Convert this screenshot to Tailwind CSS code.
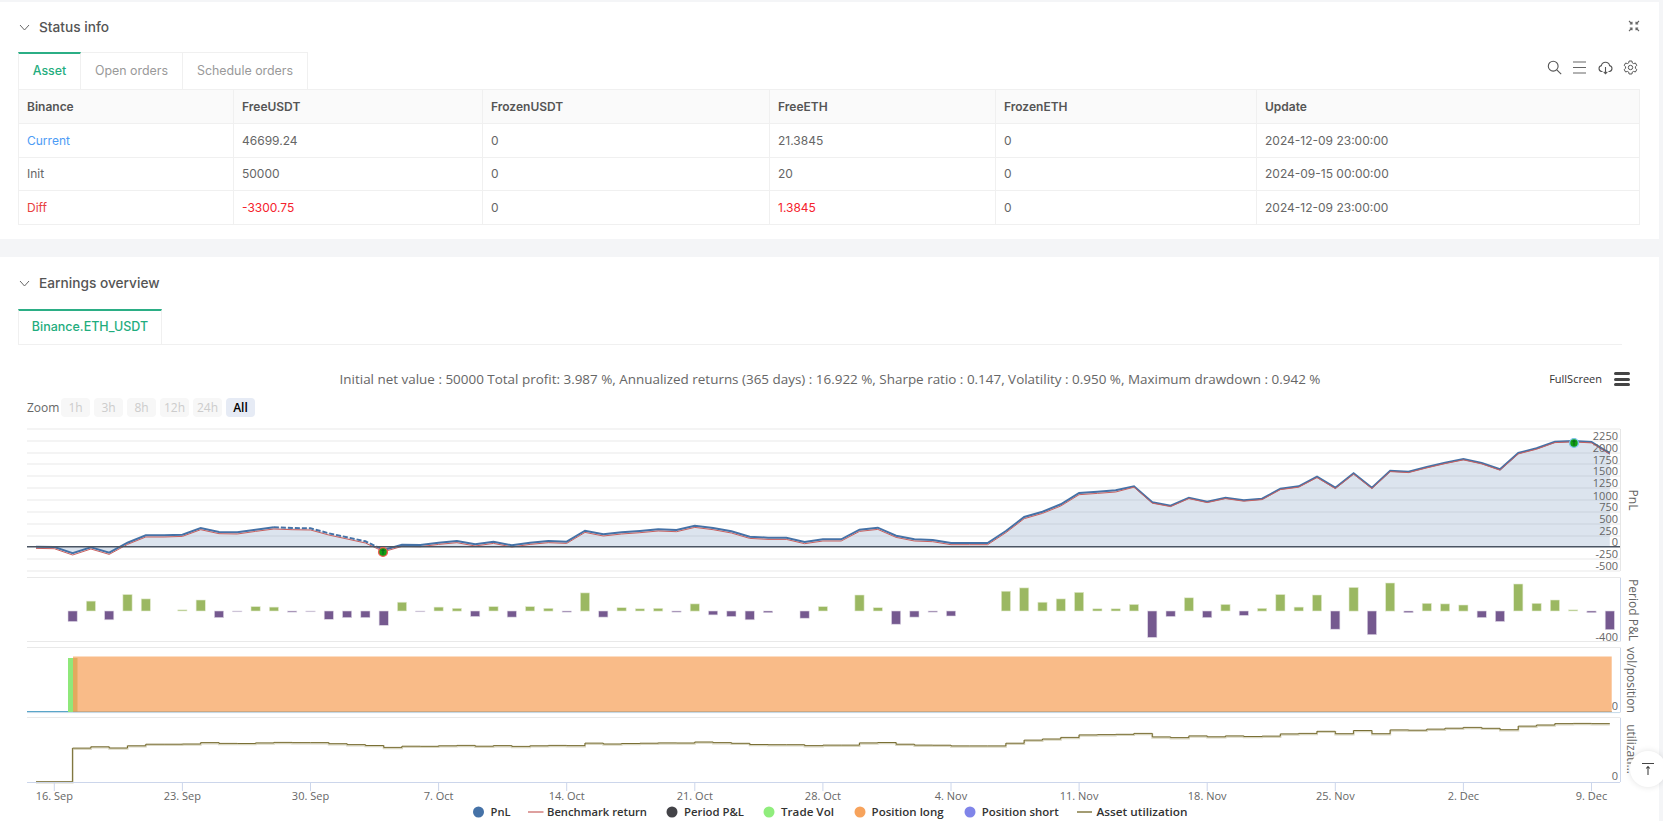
<!DOCTYPE html>
<html lang="en">
<head>
  <meta charset="UTF-8" />
  <title>Status info</title>
  <script src="https://cdn.jsdelivr.net/npm/@tailwindcss/browser@4"></script>
</head>
<body class="bg-[#f4f5f7] font-['Inter','Liberation_Sans',sans-serif] h-[821px] w-[1663px] overflow-hidden relative">

  <!-- Status info -->
  <section class="bg-white w-[1659px] mt-[2px] h-[237px] px-[18px] relative">
    <div class="flex items-center h-[50px] text-[#555]">
      <svg class="w-[11px] h-[7px] ml-[1px]" viewBox="0 0 11 7" fill="none" stroke="#666" stroke-width="1"><path d="M1 1l4.5 5L10 1" /></svg>
      <span class="ml-[9px] text-[13.7px] font-medium">Status info</span>
      <svg class="absolute right-[19px] top-[18px] w-[12px] h-[12px]" viewBox="0 0 12 12" fill="none" stroke="#666" stroke-width="1.1"><path d="M1 1l3 3M4 1.8V4H1.8M11 1L8 4M8 1.8V4h2.2M1 11l3-3M4 10.2V8H1.8M11 11L8 8M8 10.2V8h2.2" /></svg>
    </div>

    <div class="flex h-[37px] text-[12.4px] text-[#999]">
      <div class="w-[63px] border-t-2 border-t-[#2bae85] border-x border-[#f0f0f0] text-[#1fad7e] flex items-center justify-center font-medium">Asset</div>
      <div class="w-[102px] border-t border-r border-[#f0f0f0] flex items-center justify-center">Open orders</div>
      <div class="w-[125px] border-t border-r border-[#f0f0f0] flex items-center justify-center">Schedule orders</div>
      <div class="flex-1 flex items-center justify-end gap-[10.5px] pr-[3px] -mt-[6px]">
        <svg class="w-[15px] h-[15px]" viewBox="0 0 15 15" fill="none" stroke="#555" stroke-width="1.1"><circle cx="6.2" cy="6.2" r="4.9" /><path d="M9.8 9.8l4.4 4.4" /></svg>
        <svg class="w-[15px] h-[15px]" viewBox="0 0 15 15" fill="none" stroke="#666" stroke-width="1.1"><path d="M1 2h13M1 7.5h13M1 13h13" /></svg>
        <svg class="w-[15px] h-[15px]" viewBox="0 0 15 15" fill="none" stroke="#555" stroke-width="1.1"><path d="M4.5 11.5H3.6A3 3 0 0 1 3.4 5.6a4.2 4.2 0 0 1 8.2 0 3 3 0 0 1-.2 5.9h-.9M7.5 7v6.5M5.7 11.8l1.8 1.8 1.8-1.8" /></svg>
        <svg class="w-[15px] h-[15px]" viewBox="0 0 15 15" fill="none" stroke="#555" stroke-width="1"><path d="M6.1 1h2.8l.4 1.9 1.3.7 1.8-.6 1.4 2.4-1.4 1.3v1.6l1.4 1.3-1.4 2.4-1.8-.6-1.3.7-.4 1.9H6.1l-.4-1.9-1.3-.7-1.8.6-1.4-2.4 1.4-1.3V6.7L1.2 5.4 2.6 3l1.8.6 1.3-.7z" /><circle cx="7.5" cy="7.5" r="2.2" /></svg>
      </div>
    </div>

    <div class="w-[1622px] border border-[#f0f0f0] text-[12px] text-[#666]">
      <div class="grid grid-cols-[215px_249px_287px_226px_261px_1fr] h-[34px] bg-[#fafafa] font-semibold text-[#555] border-b border-[#f0f0f0]">
        <div class="px-2 flex items-center border-r border-[#f0f0f0]">Binance</div>
        <div class="px-2 flex items-center border-r border-[#f0f0f0]">FreeUSDT</div>
        <div class="px-2 flex items-center border-r border-[#f0f0f0]">FrozenUSDT</div>
        <div class="px-2 flex items-center border-r border-[#f0f0f0]">FreeETH</div>
        <div class="px-2 flex items-center border-r border-[#f0f0f0]">FrozenETH</div>
        <div class="px-2 flex items-center">Update</div>
      </div>
      <div class="grid grid-cols-[215px_249px_287px_226px_261px_1fr] h-[34px] border-b border-[#f0f0f0]">
        <div class="px-2 flex items-center border-r border-[#f0f0f0] text-[#4d9bf5]">Current</div>
        <div class="px-2 flex items-center border-r border-[#f0f0f0]">46699.24</div>
        <div class="px-2 flex items-center border-r border-[#f0f0f0]">0</div>
        <div class="px-2 flex items-center border-r border-[#f0f0f0]">21.3845</div>
        <div class="px-2 flex items-center border-r border-[#f0f0f0]">0</div>
        <div class="px-2 flex items-center">2024-12-09 23:00:00</div>
      </div>
      <div class="grid grid-cols-[215px_249px_287px_226px_261px_1fr] h-[33px] border-b border-[#f0f0f0]">
        <div class="px-2 flex items-center border-r border-[#f0f0f0]">Init</div>
        <div class="px-2 flex items-center border-r border-[#f0f0f0]">50000</div>
        <div class="px-2 flex items-center border-r border-[#f0f0f0]">0</div>
        <div class="px-2 flex items-center border-r border-[#f0f0f0]">20</div>
        <div class="px-2 flex items-center border-r border-[#f0f0f0]">0</div>
        <div class="px-2 flex items-center">2024-09-15 00:00:00</div>
      </div>
      <div class="grid grid-cols-[215px_249px_287px_226px_261px_1fr] h-[33px]">
        <div class="px-2 flex items-center border-r border-[#f0f0f0] text-[#e8403f]">Diff</div>
        <div class="px-2 flex items-center border-r border-[#f0f0f0] text-[#f5222d]">-3300.75</div>
        <div class="px-2 flex items-center border-r border-[#f0f0f0]">0</div>
        <div class="px-2 flex items-center border-r border-[#f0f0f0] text-[#f5222d]">1.3845</div>
        <div class="px-2 flex items-center border-r border-[#f0f0f0]">0</div>
        <div class="px-2 flex items-center">2024-12-09 23:00:00</div>
      </div>
    </div>
  </section>

  <!-- Earnings overview -->
  <section class="bg-white w-[1659px] mt-[18px] h-[564px] relative">
    <div class="flex items-center h-[52px] px-[18px] text-[#555]">
      <svg class="w-[11px] h-[7px] ml-[1px]" viewBox="0 0 11 7" fill="none" stroke="#666" stroke-width="1"><path d="M1 1l4.5 5L10 1" /></svg>
      <span class="ml-[9px] text-[13.7px] font-medium">Earnings overview</span>
    </div>
    <div class="mx-[18px] border-b border-[#f0f0f0] h-[36px] flex w-[1604px]">
      <div class="w-[144px] border-t-2 border-t-[#2bae85] border-x border-[#f0f0f0] text-[#1fad7e] text-[12.5px] font-medium flex items-center justify-center">Binance.ETH_USDT</div>
    </div>

    <div class="relative h-[33px] font-['Open_Sans',sans-serif] text-[#666]">
      <div class="text-center text-[13.45px] pt-[21px] leading-[26px] w-[1660px] absolute left-0 top-0">Initial net value : 50000 Total profit: 3.987 %, Annualized returns (365 days) : 16.922 %, Sharpe ratio : 0.147, Volatility : 0.950 %, Maximum drawdown : 0.942 %</div>
      <div class="absolute right-[29px] top-[26px] flex items-center gap-[12px] text-[11px] text-[#333]">
        <span>FullScreen</span>
        <div class="w-[16px] flex flex-col gap-[2.5px]">
          <div class="h-[3px] bg-[#444] rounded-sm"></div>
          <div class="h-[3px] bg-[#444] rounded-sm"></div>
          <div class="h-[3px] bg-[#444] rounded-sm"></div>
        </div>
      </div>
    </div>

    <div class="flex items-center h-[19px] mt-[20px] ml-[27px] gap-[4px] text-[12px] font-['Open_Sans',sans-serif]">
      <span class="w-[30px] text-[#666]">Zoom</span>
      <div class="w-[29px] h-[19px] bg-[#f7f7f7] text-[#ccc] rounded-sm flex items-center justify-center">1h</div>
      <div class="w-[29px] h-[19px] bg-[#f7f7f7] text-[#ccc] rounded-sm flex items-center justify-center">3h</div>
      <div class="w-[29px] h-[19px] bg-[#f7f7f7] text-[#ccc] rounded-sm flex items-center justify-center">8h</div>
      <div class="w-[29px] h-[19px] bg-[#f7f7f7] text-[#ccc] rounded-sm flex items-center justify-center">12h</div>
      <div class="w-[29px] h-[19px] bg-[#f7f7f7] text-[#ccc] rounded-sm flex items-center justify-center">24h</div>
      <div class="w-[29px] h-[19px] bg-[#e6ebf5] text-black rounded-sm flex items-center justify-center font-semibold">All</div>
    </div>

    <!-- chart canvas, y = page y - 420 -->
    <svg id="chart" class="absolute left-0 top-[163px]" width="1659" height="401" viewBox="0 420 1659 401" font-family="'Open Sans',sans-serif"></svg>
  </section>

  <!-- back to top -->
  <div class="absolute left-[1630px] top-[751px] w-[36px] h-[36px] rounded-full bg-white shadow-[0_0_6px_rgba(0,0,0,0.12)] flex items-center justify-center">
    <svg class="w-[14px] h-[14px]" viewBox="0 0 14 14" fill="none" stroke="#444" stroke-width="1.1"><path d="M1 1.5h12M7 13V4.5M5.2 6.5L7 4.5l1.8 2" /></svg>
  </div>

  <script>
    const X = d => 54.3 + 18.3 * d;
    // pnl points read in 3x crop units, day -1 (15 Sep) to day 85
    const v = [620,621,640,622,638,608,586,586,584,564,576,577,569,562,564,565,580,592,604,630,614,615,608,603,613,605,616,608,603,605,
      572,583,577,573,568,570,557,564,574,590,593,593,606,598,598,569,563,587,598,600,609,609,609,573,531,515,493,459,455,451,
      439,487,497,473,485,473,481,476,446,439,410,443,400,443,392,395,381,368,357,369,388,339,325,305,303,306,340];
    const Y = i => 340 + v[i] / 3;
    const XI = i => X(i - 1);
    let s = '';

    // pnl pane grid
    for (const g of [429,441,453,464,476,488,500,512,524,536,559,571])
      s += `<line x1="27" x2="1620" y1="${g}" y2="${g}" stroke="#e9e9e9" stroke-width="1" />`;
    s += `<line x1="1620.5" x2="1620.5" y1="429" y2="571" stroke="#e6e6e6" />`;

    const pts = off => v.map((_, i) => `${XI(i).toFixed(1)},${(Y(i) + off(i)).toFixed(1)}`);
    const zero = 546.7;
    s += `<polygon points="${XI(0)},${zero} ${pts(() => 0).join(' ')} ${XI(v.length - 1).toFixed(1)},${zero}" fill="#4572a7" fill-opacity="0.19" />`;
    const p = pts(() => 0);
    s += `<polyline points="${p.slice(0, 14).join(' ')}" fill="none" stroke="#4572a7" stroke-width="2" />`;
    s += `<polyline points="${p.slice(13, 20).join(' ')}" fill="none" stroke="#4572a7" stroke-width="2" stroke-dasharray="5 2" />`;
    s += `<polyline points="${p.slice(19).join(' ')}" fill="none" stroke="#4572a7" stroke-width="2" />`;
    s += `<polyline points="${pts(i => i < 60 ? 1.7 : 0.9).join(' ')}" fill="none" stroke="#c8605f" stroke-width="1" />`;
    s += `<line x1="27" x2="1620" y1="${zero}" y2="${zero}" stroke="#4a5462" stroke-width="1.5" />`;

    // trade markers
    s += `<circle cx="383" cy="552" r="4.4" fill="#12a012" stroke="#ee5a50" stroke-width="1.4" />`;
    s += `<path d="M383 549.5v5M381.5 551l1.5-1.5 1.5 1.5" fill="none" stroke="#0b5a20" stroke-width="1" />`;
    s += `<circle cx="1574" cy="443" r="4.4" fill="#12a012" stroke="#7cc4ea" stroke-width="1.4" />`;
    s += `<path d="M1574 440.5v5M1572.5 442l1.5-1.5 1.5 1.5" fill="none" stroke="#0b5a20" stroke-width="1" />`;

    // pnl labels
    const labels = [[2250,440],[2000,452],[1750,463.5],[1500,475],[1250,487],[1000,499.5],[750,511],[500,523],[250,535],[0,545.5],[-250,557.5],[-500,570]];
    for (const [t, y] of labels)
      s += `<text x="1618" y="${y}" text-anchor="end" font-size="11" fill="#666">${t < 0 ? '-' + (-t) : t}</text>`;

    // period pnl pane
    s += `<path d="M27 577.5H1620.5V641.5H27" fill="none" stroke="#e9e9e9" />`;
    s += `<line x1="1620.5" x2="1620.5" y1="578" y2="641" stroke="#ccd6eb" />`;
    const base = 611;
    for (let i = 2; i < v.length; i++) {
      const dv = (v[i - 1] - v[i]) * 0.55;
      if (Math.abs(dv) < 0.2) continue;
      const h = Math.max(Math.abs(dv), 0.8);
      const y = dv > 0 ? base - h : base;
      s += `<rect x="${(XI(i) - 4.6).toFixed(1)}" y="${y.toFixed(1)}" width="9.2" height="${h.toFixed(1)}" fill="${dv > 0 ? '#9bb862' : '#75598f'}" stroke="${dv > 0 ? '#e4ebd3' : '#ddd6e4'}" stroke-width="0.6" />`;
    }
    s += `<text x="1618" y="641" text-anchor="end" font-size="11" fill="#666">-400</text>`;

    // vol / position pane
    s += `<path d="M27 647.5H1620.5V712.5H27" fill="none" stroke="#e9e9e9" />`;
    s += `<line x1="1620.5" x2="1620.5" y1="648" y2="712" stroke="#ccd6eb" />`;
    s += `<rect x="68" y="658" width="9.5" height="54" fill="#8fe87a" />`;
    s += `<rect x="73" y="656.5" width="1538.7" height="55.5" fill="#f9bb88" />`;
    s += `<rect x="73" y="658" width="4.5" height="54" fill="#e2aa5e" />`;
    s += `<line x1="27" x2="68" y1="711.5" y2="711.5" stroke="#5aa5c8" stroke-width="1" />`;
    s += `<line x1="73" x2="1612" y1="711.7" y2="711.7" stroke="#b59c7c" stroke-width="0.8" />`;
    s += `<line x1="27" x2="1620" y1="712.6" y2="712.6" stroke="#bcd6ea" stroke-width="0.8" />`;
    s += `<text x="1618" y="710" text-anchor="end" font-size="11" fill="#666">0</text>`;

    // asset utilization pane
    s += `<path d="M27 717.5H1620.5" fill="none" stroke="#e9e9e9" />`;
    s += `<line x1="1620.5" x2="1620.5" y1="718" y2="782" stroke="#ccd6eb" />`;
    let u = `M${X(-1)} 781.7H${X(1)}`;
    for (let i = 2; i < v.length - 1; i++) {
      const y = 600 + (440 - 0.22 * (620 - v[i])) / 3;
      u += `V${y.toFixed(1)}H${(i === v.length - 2 ? X(85) : XI(i + 1)).toFixed(1)}`;
    }
    s += `<path d="${u}" fill="none" stroke="#c9c5a8" stroke-width="2" stroke-opacity="0.7" transform="translate(0,0.8)" />`;
    s += `<path d="${u}" fill="none" stroke="#6d6222" stroke-width="0.9" />`;
    s += `<text x="1618" y="780" text-anchor="end" font-size="11" fill="#666">0</text>`;

    // x axis
    s += `<line x1="27" x2="1620" y1="782.5" y2="782.5" stroke="#ccd6eb" />`;
    const ticks = ['16. Sep','23. Sep','30. Sep','7. Oct','14. Oct','21. Oct','28. Oct','4. Nov','11. Nov','18. Nov','25. Nov','2. Dec','9. Dec'];
    ticks.forEach((t, k) => {
      const x = X(k * 7);
      s += `<line x1="${x}" x2="${x}" y1="783" y2="791" stroke="#ccd6eb" />`;
      s += `<text x="${x}" y="800" text-anchor="middle" font-size="11" fill="#666">${t}</text>`;
    });

    // axis titles
    const title = (t, x, y) => s += `<text transform="translate(${x},${y}) rotate(90)" text-anchor="middle" font-size="12" fill="#666">${t}</text>`;
    title('PnL', 1629, 500);
    title('Period P&amp;L', 1629, 610);
    title('vol/position', 1627, 680);
    title('utilizati…', 1627, 749);

    // legend
    const dots = [[478.5,'#4572a7'],[672,'#434348'],[769,'#90ed7d'],[860,'#f7a35c'],[970,'#8085e9']];
    for (const [x, c] of dots) s += `<circle cx="${x}" cy="812" r="5.5" fill="${c}" />`;
    s += `<line x1="528" x2="543.5" y1="812" y2="812" stroke="#c8605f" stroke-width="1.2" />`;
    s += `<line x1="1077" x2="1092" y1="812" y2="812" stroke="#8c8350" stroke-width="1.6" />`;
    const names = [[490.6,'PnL',20],[547,'Benchmark return',100],[684,'Period P&amp;L',60],[781,'Trade Vol',53],[871.6,'Position long',72],[981.7,'Position short',77],[1096.5,'Asset utilization',91]];
    for (const [x, t, w] of names) s += `<text x="${x}" y="816" font-size="11.5" font-weight="600" fill="#333" textLength="${w}" lengthAdjust="spacingAndGlyphs">${t}</text>`;

    document.getElementById('chart').innerHTML = s;
  </script>
</body>
</html>
